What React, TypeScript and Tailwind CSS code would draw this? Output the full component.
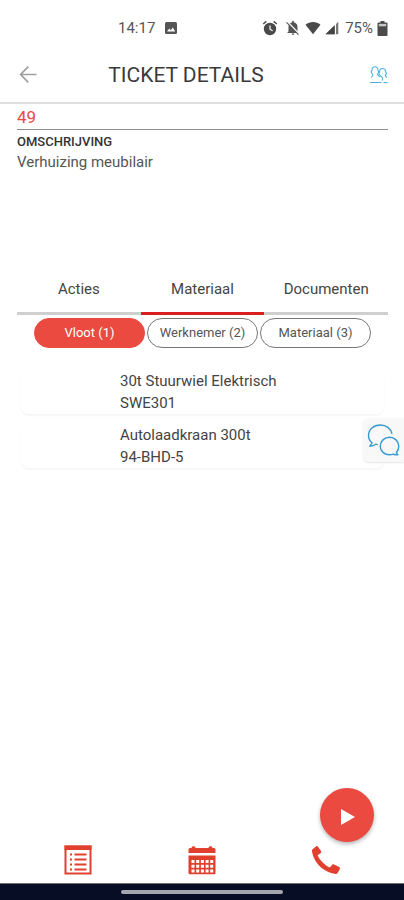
import React from "react";

const tabs = ["Acties", "Materiaal", "Documenten"];

const filters = ["Vloot (1)", "Werknemer (2)", "Materiaal (3)"];

const items = [
  { name: "30t Stuurwiel Elektrisch", code: "SWE301" },
  { name: "Autolaadkraan 300t", code: "94-BHD-5" },
];

function StatusBar() {
  return (
    <div className="flex h-12 items-center justify-between pt-2 pr-4 pl-[118px] text-[15px] text-[#555555]">
      <div className="flex items-center gap-2.5">
        <span>14:17</span>
        <svg width="12" height="12" viewBox="0 0 12 12" aria-hidden="true">
          <rect width="12" height="12" rx="1.5" fill="#555555" />
          <path d="M2 9.5 4.3 6.5 5.8 8.2 7.8 5.5 10.2 9.5Z" fill="#ffffff" />
        </svg>
      </div>
      <div className="flex items-center gap-1">
        <svg className="mr-1" width="16" height="16" viewBox="0 0 16 16" aria-hidden="true">
          <circle cx="8" cy="9" r="6.2" fill="#4a4a4a" />
          <path d="M1.2 4 4.3 1.4M14.8 4 11.7 1.4" stroke="#4a4a4a" strokeWidth="1.4" />
          <path d="M8 5.5V9.2L10.6 10.8" fill="none" stroke="#ffffff" strokeWidth="1.2" />
        </svg>
        <svg className="mr-px" width="14" height="16" viewBox="0 0 14 16" aria-hidden="true">
          <path d="M2.5 11.5V7C2.5 4.6 3.8 3 5.9 2.6V2a1.1 1.1 0 0 1 2.2 0v.6C10.2 3 11.5 4.6 11.5 7v4.5L13 13H1Z" fill="#555555" />
          <path d="M5.6 13.6h2.8a1.4 1.4 0 0 1-2.8 0Z" fill="#555555" />
          <path d="M1.4 1.8 13.2 14" stroke="#ffffff" strokeWidth="1.6" />
          <path d="M.6 2.4 12.4 14.6" stroke="#555555" strokeWidth="1.1" />
        </svg>
        <svg width="16" height="14" viewBox="0 0 16 14" aria-hidden="true">
          <path d="M.5 3.8C4.8.2 11.2.2 15.5 3.8L8 13.2Z" fill="#4a4a4a" />
        </svg>
        <svg width="14" height="14" viewBox="0 0 14 14" aria-hidden="true">
          <path d="M.5 13.3 13.3.8V13.3Z" fill="#777777" />
          <path d="M.5 13.3 9.5 4.6V13.3Z" fill="#444444" />
          <path d="M10.5 3V13.3" stroke="#ffffff" strokeWidth="1" />
        </svg>
        <span className="ml-0.5">75%</span>
        <svg width="11" height="15" viewBox="0 0 11 15" aria-hidden="true">
          <path d="M3.5 0h4v1.6h2A1 1 0 0 1 10.5 2.6V14a1 1 0 0 1-1 1h-8a1 1 0 0 1-1-1V2.600a1 1 0 0 1 1-1h2Z" fill="#4a4a4a" />
          <path d="M1.800 2.900h7.400v2.400H1.800Z" fill="#c8c8c8" />
        </svg>
      </div>
    </div>
  );
}

function Header() {
  return (
    <header className="grid h-14 grid-cols-[40px_1fr_40px] items-center border-b-2 border-[#dedede] px-4">
      <button type="button" aria-label="Terug" className="flex">
        <svg width="24" height="24" viewBox="0 0 24 24" fill="none" stroke="#a0a0a0" strokeWidth="1.700" aria-hidden="true">
          <path d="M20.500 11.500H5M12.300 3.700 4.600 11.500l7.700 7.800" />
        </svg>
      </button>
      <h1 className="pr-8 text-center text-[21px] leading-6 whitespace-nowrap text-[#3a3a3a]">TICKET DETAILS</h1>
      <button type="button" aria-label="Personen" className="flex justify-end">
        <svg width="18" height="18" viewBox="0 0 18 18" fill="none" stroke="#4db4e0" strokeWidth="1.100" aria-hidden="true">
          <path d="M2.400 7.800C.8 6.800 1 5 2 4.600 1.800 2 3.300.8 5 .8S8.200 2 8 4.600c.8.500.8 2-.2 2.900-.4 1.200-.1 2 .8 2.400l1.400.7M2.400 7.800l.4 1.200c.3 1-.5 1.600-1.800 2.200" />
          <path d="M9.500 8.500c-1-.6-.8-2 0-2.300C9.300 4 10.500 2.500 12.500 2.500s3.500 1.300 3.300 3.700c.8.500.7 1.800-.3 2.500-.3 1.500.3 2.400 1.700 2.900M9.500 8.500c.5 1.200 1.300 1.800 2.500 2.700.8.700.9 1.800.5 3.300" />
          <path d="M0 16.500h11.500M13.500 16.500H17.500" />
        </svg>
      </button>
    </header>
  );
}

function ChatButton() {
  return (
    <button
      type="button"
      aria-label="Chat"
      className="absolute top-[418px] right-0 flex h-11 w-[41px] items-center justify-center rounded-l-md bg-[#f8f8f8] shadow-[0_1px_2px_rgba(0,0,0,0.1)]"
    >
      <svg width="33" height="32" viewBox="0 0 33 32" fill="none" stroke="#369bd1" strokeWidth="1.400" strokeLinejoin="round" aria-hidden="true">
        <path d="M25 9.800C23.800 4.500 19.200 1 13.500 1 6.600 1 1.500 5.600 1.500 11.500c0 3 1.400 5.600 3.600 7.400L2.800 22.200c2.500-.1 4.500-.7 6-2 .6.200 1.200.3 2 .4" />
        <path d="M29.300 28.500c1.400-1.500 2.500-3.800 2.500-6.300 0-5-4.300-8.900-9.300-8.900s-9.300 3.900-9.300 8.900 4.300 8.600 9.300 8.600c1.300 0 2.500-.2 3.600-.7 1.300.6 2.800.9 4.800.8Z" />
      </svg>
    </button>
  );
}

function BottomNav() {
  return (
    <nav className="grid grid-cols-3 justify-items-center px-4 pb-2 text-[#e2402f]">
      <a href="#tickets" aria-label="Tickets">
        <svg width="28" height="30" viewBox="0 0 28 30" aria-hidden="true">
          <rect x="1.500" y="1.500" width="25" height="27" fill="none" stroke="currentColor" strokeWidth="2" />
          <path d="M.5 .5h27v4.500H.5Z" fill="currentColor" />
          <path d="M6 9.500h2M6 14.500h2M6 19.500h2M6 24.500h2M10.500 9.500h12M10.500 14.500h12M10.500 19.500h12M10.500 24.500h12" stroke="currentColor" strokeWidth="2.200" />
        </svg>
      </a>
      <a href="#agenda" aria-label="Agenda">
        <svg width="28" height="30" viewBox="0 0 28 30" aria-hidden="true">
          <path d="M.5 8V4.500A1.500 1.500 0 0 1 2 3h1.500C3.500.8 7.500.8 7.500 3h13c0-2.200 4-2.200 4 0H26a1.500 1.500 0 0 1 1.500 1.500V8ZM.5 10.500h27V28a1.200 1.200 0 0 1-1.200 1.200H1.700A1.200 1.200 0 0 1 .5 28Z" fill="currentColor" />
          <path
            d="M3.500 15h3v3h-3zM8.200 15h3v3h-3zM12.900 15h3v3h-3zM17.600 15h3v3h-3zM22.200 15h3v3h-3zM3.500 19.700h3v3h-3zM8.200 19.700h3v3h-3zM12.900 19.700h3v3h-3zM17.600 19.700h3v3h-3zM22.200 19.700h3v3h-3zM3.500 24.400h3v3h-3zM8.200 24.400h3v3h-3zM12.900 24.400h3v3h-3zM17.600 24.400h3v3h-3zM22.200 24.400h3v3h-3z"
            fill="#ffffff"
          />
        </svg>
      </a>
      <a href="#bellen" aria-label="Bellen">
        <svg width="30" height="30" viewBox="0 0 30 30" aria-hidden="true">
          <path
            d="M1.500 4.200 5 1.400c.7-.5 1.500-.4 2 .3l3 4.200c.5.700.4 1.500-.3 2L6.600 10.300c2.200 5 6.800 9.600 12.200 12.200l2.400-2.800c.5-.5 1.200-.6 1.800-.2l5.200 2.600c.8.400 1 1.100.6 1.900l-2.200 4c-.4.700-1.100 1-1.900.9C12.500 27.500 2.200 17.500 1 5.800c-.1-.600.1-1.200.5-1.600Z"
            fill="currentColor"
          />
        </svg>
      </a>
    </nav>
  );
}

export default function App() {
  return (
    <div className="relative flex min-h-screen flex-col bg-white font-[Roboto,sans-serif]">
      <StatusBar />
      <Header />

      <main className="flex-1 pr-4 pl-[17px]">
        <div className="flex h-[26px] items-center border-b border-[#8c8c8c] pt-0.5 text-[17px] text-[#ea4a40]">49</div>
        <section className="min-h-[135px] pt-0.5">
          <h2 className="text-[13px] leading-5 font-medium text-[#333333]">OMSCHRIJVING</h2>
          <p className="text-[15px] leading-5 text-[#555555]">Verhuizing meubilair</p>
        </section>

        <div role="tablist" className="grid h-[50px] grid-cols-3">
          {tabs.map((tab) => {
            const active = tab === "Materiaal";
            return (
              <button
                key={tab}
                type="button"
                role="tab"
                aria-selected={active}
                className={`border-b-3 pt-0.5 text-[15px] text-[#444444] ${active ? "border-[#d9201f]" : "border-[#cfcfcf]"}`}
              >
                {tab}
              </button>
            );
          })}
        </div>

        <div className="grid grid-cols-3 gap-0.5 px-[17px] pt-[3px]">
          {filters.map((filter, i) => (
            <button
              key={filter}
              type="button"
              className={`h-[30px] rounded-full border text-[13px] whitespace-nowrap ${
                i === 0 ? "border-[#ea4a3f] bg-[#ea4a3f] text-white" : "border-[#777777] bg-white text-[#555555]"
              }`}
            >
              {filter}
            </button>
          ))}
        </div>

        <ul className="flex flex-col gap-2.5 px-1 pt-[22px]">
          {items.map((item) => (
            <li
              key={item.code}
              className="rounded-lg bg-white pl-[99px] text-[15px] leading-[22px] text-[#444444] shadow-[0_2px_2px_rgba(0,0,0,0.04)]"
            >
              <p>{item.name}</p>
              <p>{item.code}</p>
            </li>
          ))}
        </ul>
      </main>

      <ChatButton />

      <button
        type="button"
        aria-label="Start"
        className="absolute right-[30px] bottom-[58px] flex h-[54px] w-[54px] items-center justify-center rounded-full bg-[#ea4a3f] pt-1 pl-0.5 shadow-[0_2px_4px_rgba(0,0,0,0.3)]"
      >
        <svg width="14" height="16" viewBox="0 0 14 16" aria-hidden="true">
          <path d="M0 0 14 8 0 16Z" fill="#ffffff" />
        </svg>
      </button>

      <BottomNav />
      <div className="flex h-[17px] items-center justify-center border-t border-[#6f7268] bg-[#060d24]">
        <div className="h-1 w-2/5 rounded-full bg-[#a4a7b0]" />
      </div>
    </div>
  );
}
